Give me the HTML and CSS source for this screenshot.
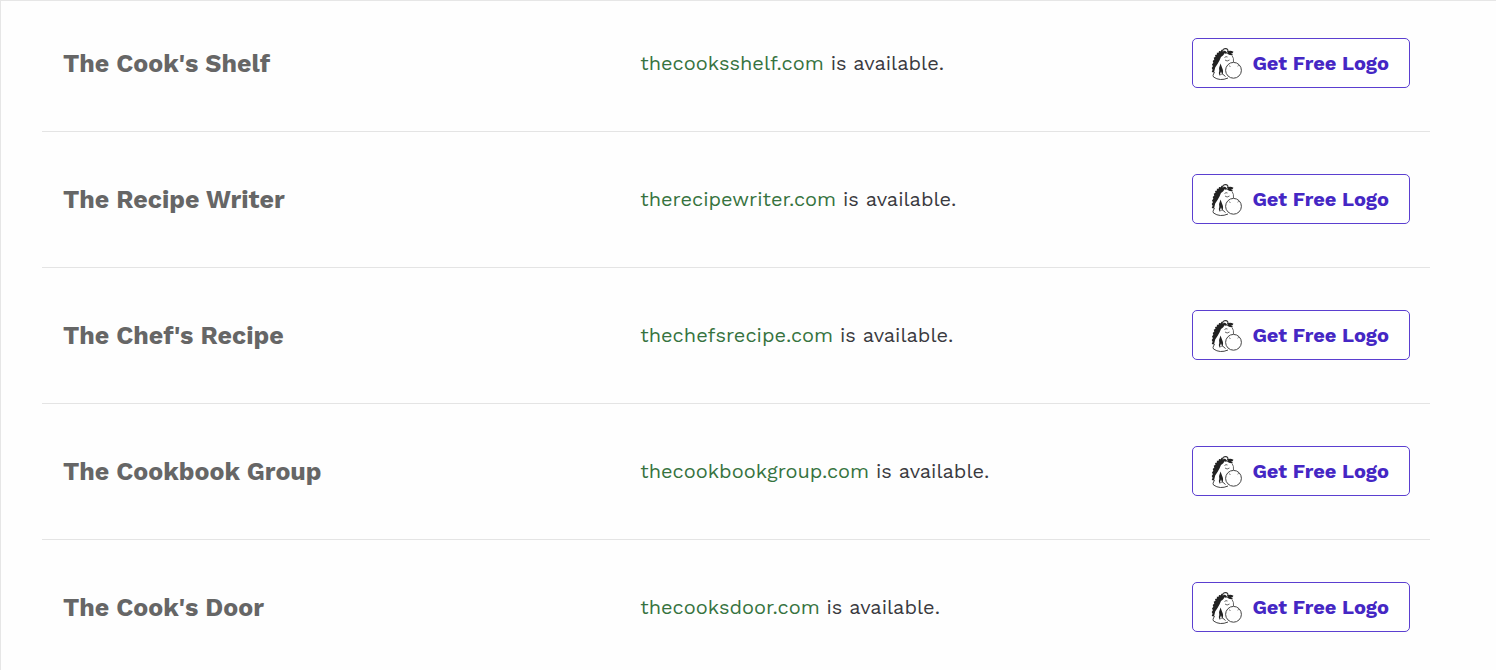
FILE: index.html
```html
<!DOCTYPE html>
<html lang="en">
<head>
  <meta charset="UTF-8">
  <meta name="viewport" content="width=device-width, initial-scale=1.0">
  <title>Business Name Ideas</title>
  <link rel="stylesheet" href="styles.css">
</head>
<body>
  <!-- donkey icon shared by all the logo buttons -->
  <svg class="sprite" aria-hidden="true">
    <symbol id="donkey" viewBox="0 -1 32 34">
      <path d="M12.500 3 L10.500 2.800 9.800 4.200 8 4 7.600 5.700 5.800 5.800 6 7.500 4 8.100 4.500 9.800 2.700 10.800 3.300 12.600 1.700 14 2.300 15.800 1 17.500 1.900 19.300 .7 21 1.600 22.800 .7 25 3 25.600 4.200 20.500 6.500 17 8.500 13.500 10 10 12 8.500 13.500 6.500 14.500 5Z" fill="#222"/>
      <path d="M11.500 4.500 Q12 1.200 15 1.700 Q17.500 2.300 16.800 5" fill="#fff" stroke="#333" stroke-width="1.200"/>
      <path d="M12.500 5 Q14 4 15.500 6.500 M16.500 5.500 Q19 3.500 22 5.500 M16.500 6 Q19 7.500 21.500 7.500 M18 5.500 L20.500 6.500" fill="none" stroke="#222" stroke-width="1.700"/>
      <path d="M13.500 10.500 Q15 9 16.500 10 M14 13 Q16 15 18.500 13 M21 8.500 Q23 11 22.500 15" fill="none" stroke="#555" stroke-width=".9"/>
      <path d="M3.500 25 Q1 29 2.500 30 Q9 34.500 17 31 M14.500 29.500 L11 26.500" fill="none" stroke="#444" stroke-width="1"/>
      <path d="M9.500 16.500 Q7.500 21 8.300 24 Q7 26.500 8.500 28.500 L11.300 27.500 Q13 24.500 11 20.500Z" fill="#222"/>
      <path d="M8.800 27.500 L10 24.300 11 27.500Z" fill="#fff"/>
      <ellipse cx="22.500" cy="23.300" rx="7.900" ry="7.900" fill="#fff" stroke="#444" stroke-width="1"/>
      <path d="M18.500 18.600 L19.200 19.800 M27.500 18.300 L26.800 19.300" fill="none" stroke="#444" stroke-width=".9"/>
    </symbol>
  </svg>

  <main class="results">
    <ul class="name-list">
      <li class="name-row">
        <h2 class="name">The Cook's Shelf</h2>
        <div class="details">
          <p class="domain"><a href="#">thecooksshelf.com</a> is available.</p>
          <button type="button" class="logo-btn"><svg class="icon" aria-hidden="true"><use href="#donkey"/></svg>Get Free Logo</button>
        </div>
      </li>
      <li class="name-row">
        <h2 class="name">The Recipe Writer</h2>
        <div class="details">
          <p class="domain"><a href="#">therecipewriter.com</a> is available.</p>
          <button type="button" class="logo-btn"><svg class="icon" aria-hidden="true"><use href="#donkey"/></svg>Get Free Logo</button>
        </div>
      </li>
      <li class="name-row">
        <h2 class="name">The Chef's Recipe</h2>
        <div class="details">
          <p class="domain"><a href="#">thechefsrecipe.com</a> is available.</p>
          <button type="button" class="logo-btn"><svg class="icon" aria-hidden="true"><use href="#donkey"/></svg>Get Free Logo</button>
        </div>
      </li>
      <li class="name-row">
        <h2 class="name">The Cookbook Group</h2>
        <div class="details">
          <p class="domain"><a href="#">thecookbookgroup.com</a> is available.</p>
          <button type="button" class="logo-btn"><svg class="icon" aria-hidden="true"><use href="#donkey"/></svg>Get Free Logo</button>
        </div>
      </li>
      <li class="name-row">
        <h2 class="name">The Cook's Door</h2>
        <div class="details">
          <p class="domain"><a href="#">thecooksdoor.com</a> is available.</p>
          <button type="button" class="logo-btn"><svg class="icon" aria-hidden="true"><use href="#donkey"/></svg>Get Free Logo</button>
        </div>
      </li>
    </ul>
  </main>
</body>
</html>
```

FILE: styles.css
```css
* {
  box-sizing: border-box;
}
body {
  margin: 0;
  font-family: "Work Sans", Inter, sans-serif;
  background: #fefefe;
  color: #3a3a3f;
}
.sprite {
  display: none;
}
.results {
  border-top: 1px solid #e6e6e6;
  border-left: 1px solid #e6e6e6;
  padding: 0 66px 0 41px;
}
.name-list {
  list-style: none;
  margin: 0;
  padding: 0;
}
.name-row {
  display: grid;
  grid-template-columns: 3fr 4fr;
  align-items: center;
  padding: 42px 20px 43px 21px;
  border-bottom: 1px solid #e4e4e4;
}
.name-row:first-child {
  padding-top: 37px;
}
.name-row:last-child {
  padding-bottom: 38px;
  border-bottom: none;
}
.name {
  margin: 0;
  font-size: 25px;
  line-height: 33px;
  font-weight: 700;
  color: #666;
}
.details {
  display: flex;
  justify-content: space-between;
  align-items: center;
}
.domain {
  margin: 0;
  font-size: 20px;
  line-height: 28px;
}
.domain a {
  color: #36733f;
  text-decoration: none;
}
.logo-btn {
  display: flex;
  align-items: center;
  gap: 9px;
  height: 50px;
  padding: 0 20px 0 18px;
  border: 1px solid #5b3fd0;
  border-radius: 5px;
  background: #fff;
  color: #4527c4;
  font-family: inherit;
  font-size: 20px;
  font-weight: 700;
  cursor: pointer;
}
.icon {
  width: 32px;
  height: 34px;
}
```
